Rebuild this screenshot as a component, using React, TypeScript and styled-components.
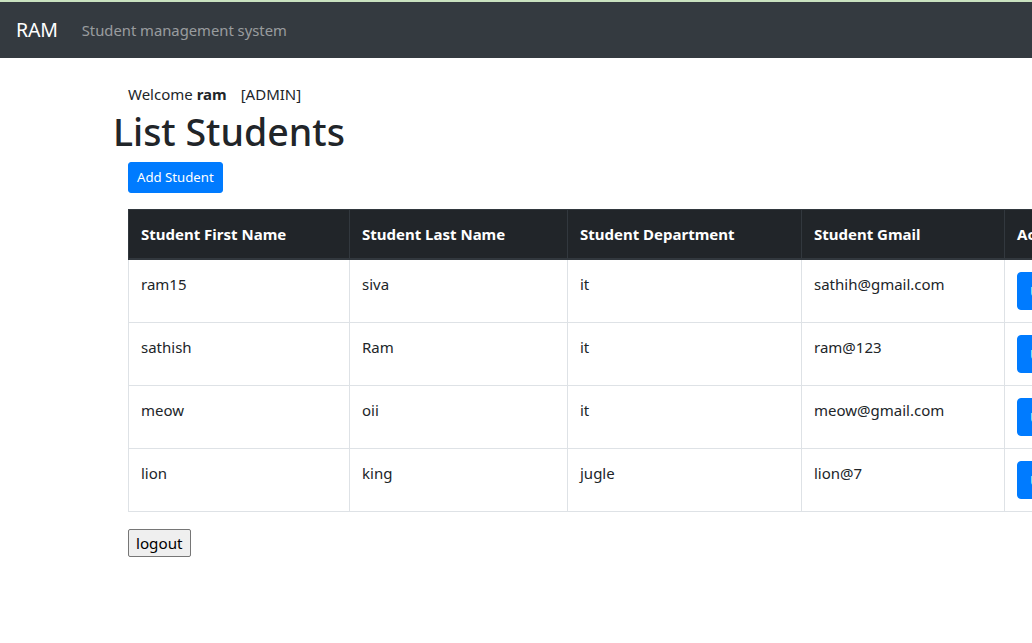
import styled, { createGlobalStyle } from "styled-components";

const Global = createGlobalStyle`
  html, body {
    margin: 0;
    padding: 0;
    overflow: hidden;
    background: #fff;
  }
  body {
    font-family: "Noto Sans", "Open Sans", sans-serif;
    font-size: 16px;
    line-height: 1.5;
    color: #212529;
  }
`;

const TopLine = styled.div`
  height: 2px;
  background: #c9e2c0;
`;

const Navbar = styled.nav`
  height: 56px;
  background: #343a40;
  display: flex;
  align-items: center;
  padding: 0 16px;
  gap: 24px;
`;

const Brand = styled.span`
  color: #fff;
  font-size: 19.5px;
  letter-spacing: -0.2px;
`;

const NavText = styled.span`
  color: rgba(255, 255, 255, 0.5);
  font-size: 14.8px;
`;

const Page = styled.main`
  padding: 24px 0 0 113px;
`;

const Inner = styled.div`
  padding-left: 15px;
`;

const Welcome = styled.div`
  font-size: 15px;
  line-height: 24px;
  b {
    font-weight: 700;
    margin-right: 14px;
  }
`;

const Title = styled.h1`
  margin: 2px 0 6px;
  font-size: 37.5px;
  font-weight: 500;
  line-height: 48px;
`;

const Button = styled.button<{ $size?: "sm" | "md" }>`
  background: #007bff;
  color: #fff;
  border: 1px solid #007bff;
  border-radius: ${p => (p.$size === "sm" ? "3px" : "4px")};
  font-family: inherit;
  font-size: ${p => (p.$size === "sm" ? "13.2px" : "15px")};
  line-height: ${p => (p.$size === "sm" ? "21px" : "24px")};
  padding: ${p => (p.$size === "sm" ? "4px 8px" : "6px 12px")};
  cursor: pointer;
`;

const Table = styled.table`
  margin-top: 16px;
  border-collapse: collapse;
  table-layout: fixed;
  width: 1080px;
`;

const Th = styled.th<{ $w: number }>`
  box-sizing: border-box;
  width: ${p => p.$w}px;
  background: #212529;
  color: #fff;
  text-align: left;
  font-size: 15px;
  font-weight: 700;
  padding: 12px;
  line-height: 24px;
  border: 1px solid #32383e;
  border-bottom: 2px solid #32383e;
  white-space: nowrap;
  overflow: hidden;
`;

const Td = styled.td`
  padding: 12px;
  vertical-align: top;
  font-size: 15px;
  line-height: 24px;
  border: 1px solid #dee2e6;
`;

const Actions = styled.div`
  display: flex;
  gap: 8px;
`;

const Logout = styled.button`
  margin-top: 17px;
  font-family: inherit;
  font-size: 15.2px;
  line-height: 20px;
  padding: 3px 7px;
  background: #efefef;
  border: 1px solid #767676;
  border-radius: 2px;
  color: #000;
`;

const students = [
  { first: "ram15", last: "siva", dept: "it", mail: "sathih@gmail.com" },
  { first: "sathish", last: "Ram", dept: "it", mail: "ram@123" },
  { first: "meow", last: "oii", dept: "it", mail: "meow@gmail.com" },
  { first: "lion", last: "king", dept: "jugle", mail: "lion@7" },
];

export default function App() {
  return (
    <>
      <Global />
      <TopLine />
      <Navbar>
        <Brand>RAM</Brand>
        <NavText>Student management system</NavText>
      </Navbar>
      <Page>
        <Inner>
          <Welcome>
            Welcome <b>ram</b>[ADMIN]
          </Welcome>
        </Inner>
        <Title>List Students</Title>
        <Inner>
          <Button $size="sm">Add Student</Button>
          <Table>
            <thead>
              <tr>
                <Th $w={221}>Student First Name</Th>
                <Th $w={218}>Student Last Name</Th>
                <Th $w={234}>Student Department</Th>
                <Th $w={203}>Student Gmail</Th>
                <Th $w={204}>Actions</Th>
              </tr>
            </thead>
            <tbody>
              {students.map(s => (
                <tr key={s.first}>
                  <Td>{s.first}</Td>
                  <Td>{s.last}</Td>
                  <Td>{s.dept}</Td>
                  <Td>{s.mail}</Td>
                  <Td>
                    <Actions>
                      <Button>Update</Button>
                      <Button>Delete</Button>
                    </Actions>
                  </Td>
                </tr>
              ))}
            </tbody>
          </Table>
          <Logout>logout</Logout>
        </Inner>
      </Page>
    </>
  );
}
